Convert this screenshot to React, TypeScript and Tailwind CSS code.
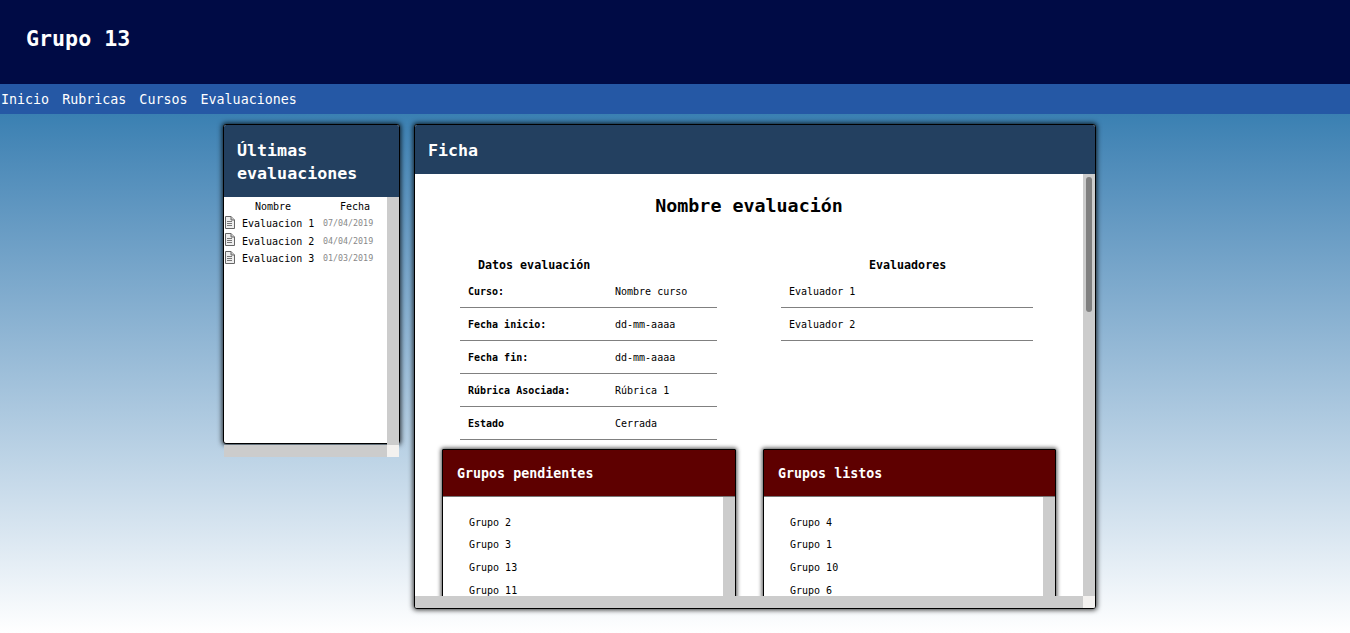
const mono = 'font-["DejaVu_Sans_Mono",monospace]'

const evaluaciones = [
  { name: 'Evaluacion 1', date: '07/04/2019', h: 'h-[17px]' },
  { name: 'Evaluacion 2', date: '04/04/2019', h: 'h-[18px]' },
  { name: 'Evaluacion 3', date: '01/03/2019', h: 'h-[17px]' },
]

const datos = [
  ['Curso:', 'Nombre curso'],
  ['Fecha inicio:', 'dd-mm-aaaa'],
  ['Fecha fin:', 'dd-mm-aaaa'],
  ['Rúbrica Asociada:', 'Rúbrica 1'],
  ['Estado', 'Cerrada'],
]

function DocIcon() {
  return (
    <svg width="11" height="13" viewBox="0 0 11 13" className="shrink-0">
      <path d="M1.5 .5H7L10.5 4V12.5H1.5Z" fill="#eeeeee" stroke="#666" />
      <path d="M7 .5V4H10.5" fill="#ccc" stroke="#666" />
      <path d="M3 5.5H8M3 7.5H8M3 9.5H8" stroke="#777" />
    </svg>
  )
}

function GroupCard({ title, groups, width }: { title: string; groups: string[]; width: string }) {
  return (
    <div className={`${width} h-[200px] shrink-0 border border-black rounded-[1px] bg-white shadow-[0_0_4px_1px_rgba(0,0,0,0.7)] flex flex-col overflow-hidden`}>
      <div className="h-[47px] shrink-0 bg-[#5e0000] border-b border-[#777] flex items-center pl-[14px] pt-[1px] text-white font-bold text-[13.33px]">
        {title}
      </div>
      <div className="flex flex-1">
        <div className="flex-1 pl-[26px] pt-[14.7px] text-[10px] text-black">
          {groups.map((g) => (
            <div key={g} className="h-[22.7px] leading-[22px]">{g}</div>
          ))}
        </div>
        <div className="w-[12px] bg-[#cccccc]"></div>
      </div>
    </div>
  )
}

export default function App() {
  return (
    <div className={`h-screen overflow-hidden flex flex-col transform-gpu ${mono}`}>
      <header className="h-[84px] shrink-0 bg-[#000b45] flex items-center pl-[26px] pb-[6px]">
        <h1 className="text-white font-bold text-[21.67px]">Grupo 13</h1>
      </header>
      <nav className="h-[30px] shrink-0 bg-[#2558a5] flex items-center pl-[1px] pt-[1px] gap-[13px] text-white text-[13.33px]">
        <a>Inicio</a>
        <a>Rubricas</a>
        <a>Cursos</a>
        <a>Evaluaciones</a>
      </nav>

      <main className="flex-1 flex gap-[14px] pl-[223px] pt-[10px] bg-gradient-to-b from-[#3a80b2] to-white">
        {/* ULTIMAS EVALUACIONES */}
        <section className="relative w-[177px] h-[320px] border border-black rounded-[3px] bg-white shadow-[0_0_5px_1px_rgba(0,0,0,0.8)] flex flex-col">
          <div className="h-[72px] shrink-0 bg-[#234060] text-white font-bold text-[16.67px] leading-[23px] pl-[13px] pt-[14px] rounded-t-[2px]">
            Últimas evaluaciones
          </div>
          <div className="flex flex-1 min-h-0">
            <div className="flex-1 text-[10px] text-black">
              <div className="flex h-[18px] items-center">
                <span className="ml-[31px] w-[85px]">Nombre</span>
                <span>Fecha</span>
              </div>
              {evaluaciones.map((e) => (
                <div key={e.name} className={`flex items-center ${e.h}`}>
                  <span className="-mt-[3px]"><DocIcon /></span>
                  <span className="ml-[7px] w-[81px]">{e.name}</span>
                  <span className="text-[8.33px] text-[#888]">{e.date}</span>
                </div>
              ))}
            </div>
            <div className="w-[12px] -mb-[2px] bg-[#cccccc]"></div>
          </div>
          <div className="absolute left-0 right-0 top-[320px] h-[12px] flex">
            <div className="flex-1 bg-[#cccccc]"></div>
            <div className="w-[12px] bg-[#f3f1ef]"></div>
          </div>
        </section>

        {/* FICHA */}
        <section className="relative w-[682px] h-[485px] border border-black rounded-[3px] bg-white shadow-[0_0_5px_1px_rgba(0,0,0,0.8)] flex flex-col overflow-hidden">
          <div className="h-[49px] shrink-0 bg-[#234060] flex items-center pl-[13px] pt-[1px] text-white font-bold text-[16.67px]">
            Ficha
          </div>
          <div className="flex flex-1 min-h-0">
            <div className="flex-1 min-w-0 overflow-hidden text-black">
              <h2 className="h-[63px] pt-[19px] text-center font-bold text-[18.33px] leading-[25px]">Nombre evaluación</h2>

              <div className="flex h-[212px]">
                <div className="w-[257px] ml-[45px]">
                  <div className="h-[23px] pt-[17px] pl-[18px] font-bold text-[11.67px] leading-[23px]">Datos evaluación</div>
                  <div className="mt-[15px] text-[10px]">
                    {datos.map(([k, v]) => (
                      <div key={k} className="flex items-center h-[33px] border-b border-[#808080] pl-[8px]">
                        <span className="w-[147px] font-bold">{k}</span>
                        <span>{v}</span>
                      </div>
                    ))}
                  </div>
                </div>
                <div className="w-[252px] ml-[64px]">
                  <div className="h-[23px] pt-[17px] pl-[88px] font-bold text-[11.67px] leading-[23px]">Evaluadores</div>
                  <div className="mt-[15px] text-[10px]">
                    <div className="flex items-center h-[33px] border-b border-[#808080] pl-[8px]">Evaluador 1</div>
                    <div className="flex items-center h-[33px] border-b border-[#808080] pl-[8px]">Evaluador 2</div>
                  </div>
                </div>
              </div>

              <div className="flex gap-[27px] pl-[27px]">
                <GroupCard title="Grupos pendientes" groups={['Grupo 2', 'Grupo 3', 'Grupo 13', 'Grupo 11']} width="w-[294px]" />
                <GroupCard title="Grupos listos" groups={['Grupo 4', 'Grupo 1', 'Grupo 10', 'Grupo 6']} width="w-[293px]" />
              </div>
            </div>
            <div className="w-[12px] shrink-0 bg-[#cccccc] pt-[3px]">
              <div className="mx-auto w-[6px] h-[135px] rounded-full bg-[#808080]"></div>
            </div>
          </div>
          <div className="absolute left-0 right-0 bottom-0 h-[12px] flex">
            <div className="flex-1 bg-[#cccccc]"></div>
            <div className="w-[12px] bg-[#f3f1ef]"></div>
          </div>
        </section>
      </main>
    </div>
  )
}
